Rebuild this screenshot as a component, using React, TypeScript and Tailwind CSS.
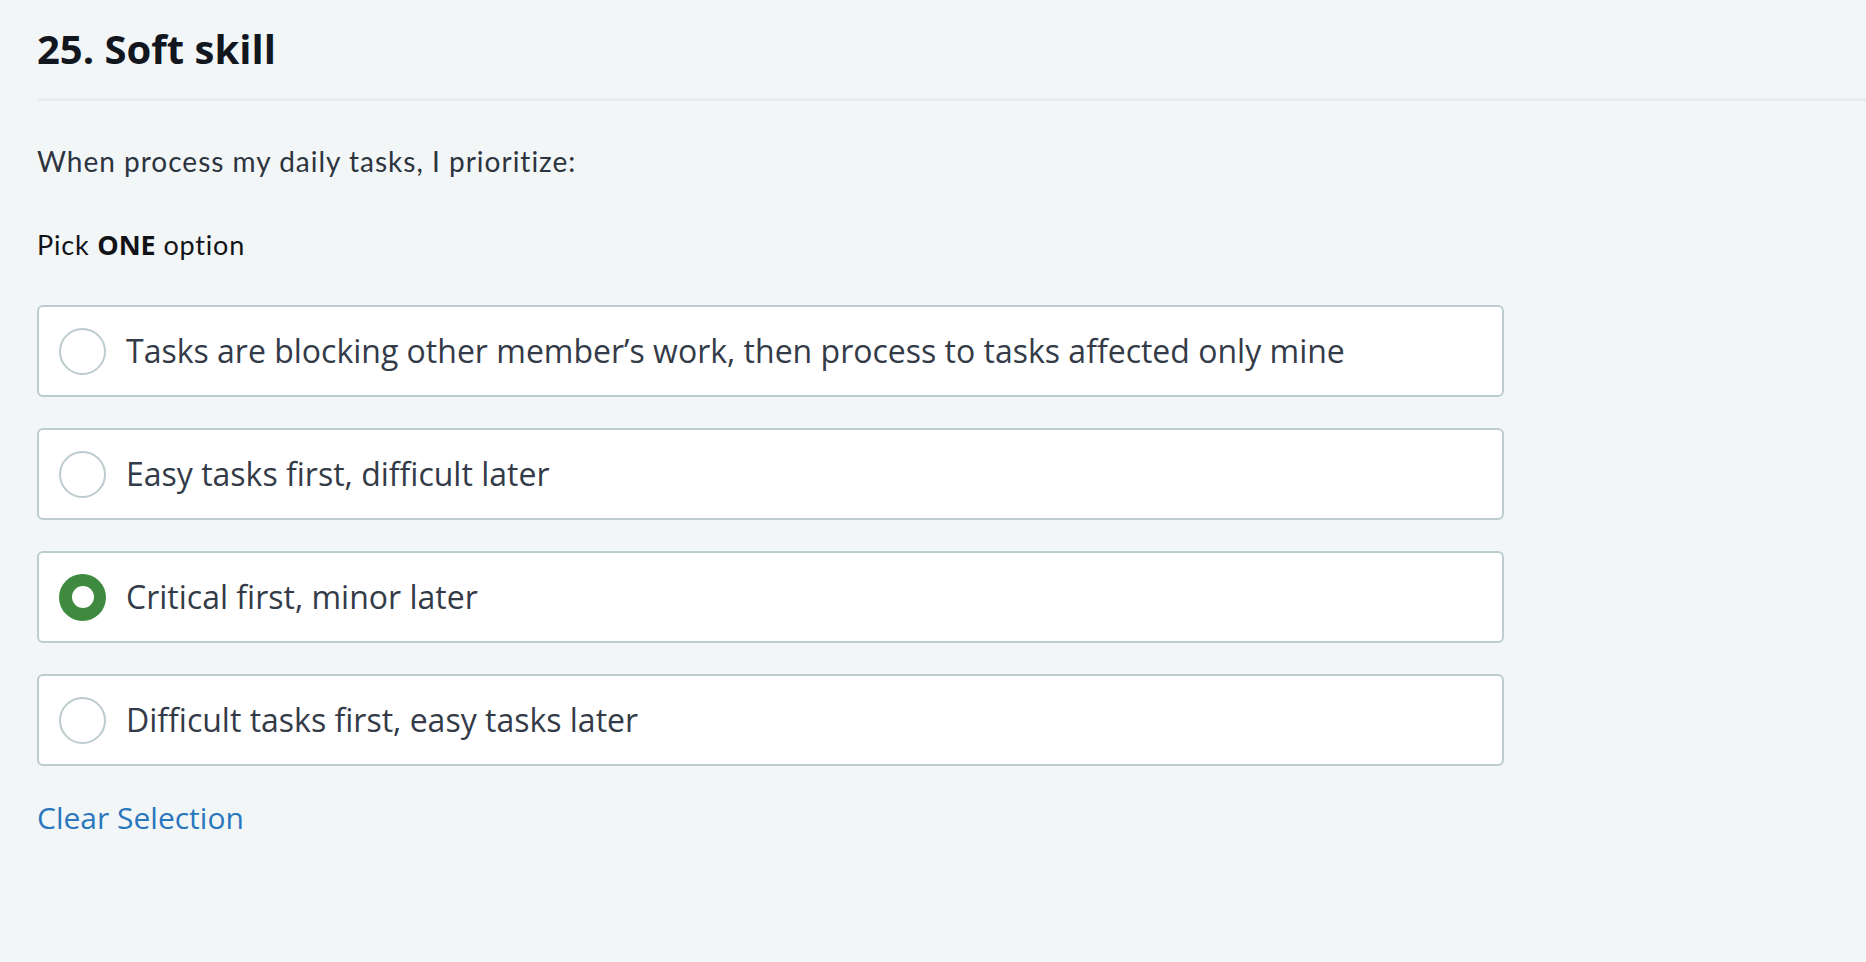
import { useState } from "react";

const OPTIONS = [
  "Tasks are blocking other member’s work, then process to tasks affected only mine",
  "Easy tasks first, difficult later",
  "Critical first, minor later",
  "Difficult tasks first, easy tasks later",
];

function Radio({ checked }: { checked: boolean }) {
  if (checked) {
    return (
      <span className="flex h-[47px] w-[47px] shrink-0 items-center justify-center rounded-full bg-[#3e8a3e]">
        <span className="h-[22px] w-[22px] rounded-full bg-white" />
      </span>
    );
  }
  return (
    <span className="h-[47px] w-[47px] shrink-0 rounded-full border-2 border-[#bccbce] bg-white" />
  );
}

export default function App() {
  const [selected, setSelected] = useState<number | null>(2);

  return (
    <div className="min-h-[962px] bg-[#f3f6f7] pl-[37px] pt-[25px] font-['Open_Sans',sans-serif]">
      {/* Question header */}
      <h2 className="border-b-[3px] border-[#e9edee] pb-[25px] text-[40px] font-bold leading-[48px] text-[#12161f]">
        25. Soft skill
      </h2>

      <p className="mt-[44px] font-['Lato',sans-serif] text-[28px] leading-[32px] tracking-[1px] text-[#2c3440]">
        When process my daily tasks, I prioritize:
      </p>

      <p className="mt-[52px] font-['Lato',sans-serif] text-[27px] leading-[32px] tracking-[0.8px] text-[#111318]">
        Pick <span className="font-['Open_Sans',sans-serif] font-bold tracking-normal">ONE</span> option
      </p>

      {/* Options */}
      <div className="mt-[44px] flex w-[1467px] flex-col gap-[31px]">
        {OPTIONS.map((label, i) => (
          <button
            key={label}
            type="button"
            onClick={() => setSelected(i)}
            className="flex h-[92px] items-center gap-[20px] rounded-[6px] border-2 border-[#bccccf] bg-white pl-[20px] text-left"
          >
            <Radio checked={selected === i} />
            <span className="text-[32px] leading-[44px] text-[#343b48]">{label}</span>
          </button>
        ))}
      </div>

      <button
        type="button"
        onClick={() => setSelected(null)}
        className="mt-[32px] block text-[30px] leading-[40px] text-[#2a77bd]"
      >
        Clear Selection
      </button>
    </div>
  );
}
